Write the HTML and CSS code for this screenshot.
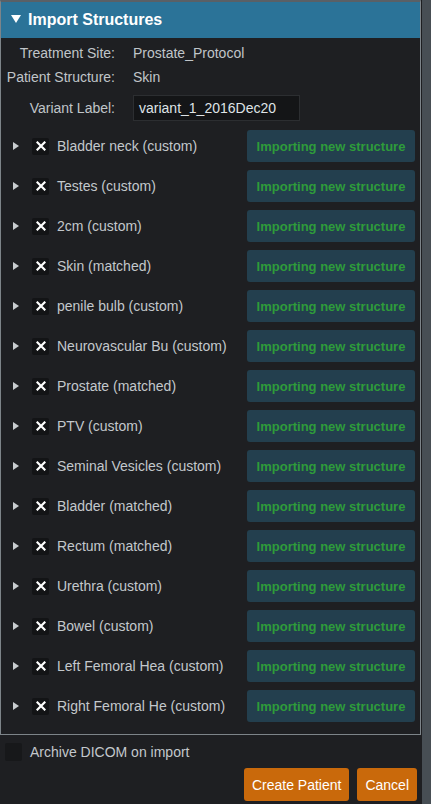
FILE: index.html
```html
<!DOCTYPE html>
<html>
<head>
<meta charset="utf-8">
<link rel="stylesheet" href="styles.css">
</head>
<body>
<div class="app">
  <div class="main">
    <div class="panel">
      <div class="header">
        <svg class="hdr-tri" width="10" height="8" viewBox="0 0 10 8"><polygon points="0,0 10,0 5,8" fill="#ffffff"/></svg>
        <span>Import Structures</span>
      </div>
      <div class="form">
        <div class="frow"><div class="flabel">Treatment Site:</div><div class="fvalue">Prostate_Protocol</div></div>
        <div class="frow"><div class="flabel">Patient Structure:</div><div class="fvalue">Skin</div></div>
        <div class="frow input-row"><div class="flabel">Variant Label:</div><div class="finput">variant_1_2016Dec20</div></div>
      </div>
      <div class="list" id="list"></div>
    </div>
    <div class="footer">
      <div class="archive"><span class="cb-empty"></span><span>Archive DICOM on import</span></div>
      <div class="actions">
        <button class="btn">Create Patient</button>
        <button class="btn">Cancel</button>
      </div>
    </div>
  </div>
  <div class="scroll"></div>
</div>
<script>
var names = ["Bladder neck (custom)","Testes (custom)","2cm (custom)","Skin (matched)","penile bulb (custom)","Neurovascular Bu (custom)","Prostate (matched)","PTV (custom)","Seminal Vesicles (custom)","Bladder (matched)","Rectum (matched)","Urethra (custom)","Bowel (custom)","Left Femoral Hea (custom)","Right Femoral He (custom)"];
var list = document.getElementById('list');
names.forEach(function(n){
  var r = document.createElement('div');
  r.className = 'srow';
  r.innerHTML = '<svg class="tri" width="6" height="8" viewBox="0 0 6 8"><polygon points="0,0 6,4 0,8" fill="#c9cdd0"/></svg>' +
    '<span class="cb"><svg width="10" height="10" viewBox="0 0 10 10"><path d="M1.5 1.5 L8.5 8.5 M8.5 1.5 L1.5 8.5" stroke="#ffffff" stroke-width="2.2" stroke-linecap="square"/></svg></span>' +
    '<span class="sname"></span>' +
    '<span class="status">Importing new structure</span>';
  r.querySelector('.sname').textContent = n;
  list.appendChild(r);
});
</script>
</body>
</html>
```
FILE: styles.css
```css
html, body {
  margin: 0;
  padding: 0;
  background: #1e1f22;
  font-family: "Liberation Sans", Arial, sans-serif;
}
.app {
  display: flex;
  width: 431px;
  height: 804px;
}
.main {
  width: 421px;
  display: flex;
  flex-direction: column;
}
.scroll {
  width: 9px;
  margin-left: 1px;
  background: #474e54;
}
.panel {
  border: 1px solid #7d8489;
  border-top: 2px solid #5a6066;
  box-sizing: border-box;
  height: 735px;
  display: flex;
  flex-direction: column;
}
.header {
  height: 36px;
  background: #2b7398;
  display: flex;
  align-items: center;
  padding-left: 10px;
  gap: 7px;
  color: #ffffff;
  font-weight: bold;
  font-size: 16px;
}
.hdr-tri { margin-top: -2px; }
.form {
  padding-top: 3px;
}
.frow {
  display: flex;
  align-items: center;
  height: 24px;
  font-size: 14px;
  color: #c0c5c9;
}
.flabel {
  width: 114px;
  text-align: right;
  flex: none;
}
.fvalue {
  margin-left: 18px;
}
.input-row {
  height: 26px;
  margin-top: 6px;
}
.finput {
  margin-left: 18px;
  width: 167px;
  height: 26px;
  box-sizing: border-box;
  background: #141517;
  border: 1px solid #2c2e31;
  color: #dfe3e6;
  font-size: 14px;
  line-height: 24px;
  padding-left: 5px;
}
.list {
  margin-top: 5px;
}
.srow {
  height: 40px;
  display: flex;
  align-items: center;
}
.tri {
  margin-left: 12px;
  flex: none;
}
.cb {
  margin-left: 13px;
  width: 17px;
  height: 17px;
  background: #131416;
  border-radius: 2px;
  display: flex;
  align-items: center;
  justify-content: center;
  flex: none;
}
.sname {
  margin-left: 8px;
  font-size: 14px;
  color: #c3c8cc;
  flex: 1;
  white-space: nowrap;
}
.status {
  width: 168px;
  height: 32px;
  margin-right: 5px;
  background: #233f4e;
  border-radius: 3px;
  color: #2e9c3a;
  font-weight: bold;
  font-size: 13px;
  display: flex;
  align-items: center;
  justify-content: center;
  flex: none;
}
.footer {
  display: flex;
  flex-direction: column;
}
.archive {
  display: flex;
  align-items: center;
  height: 33px;
  padding-left: 5px;
  gap: 8px;
  font-size: 14px;
  color: #c3c8cc;
}
.cb-empty {
  width: 17px;
  height: 18px;
  background: #17181a;
  border-radius: 2px;
}
.actions {
  display: flex;
  justify-content: flex-end;
  gap: 8px;
  padding-right: 4px;
}
.btn {
  height: 33px;
  background: #c9690b;
  border: none;
  border-radius: 3px;
  color: #ffffff;
  font-family: "Liberation Sans", Arial, sans-serif;
  font-size: 14px;
  padding: 0 8px;
}
```
